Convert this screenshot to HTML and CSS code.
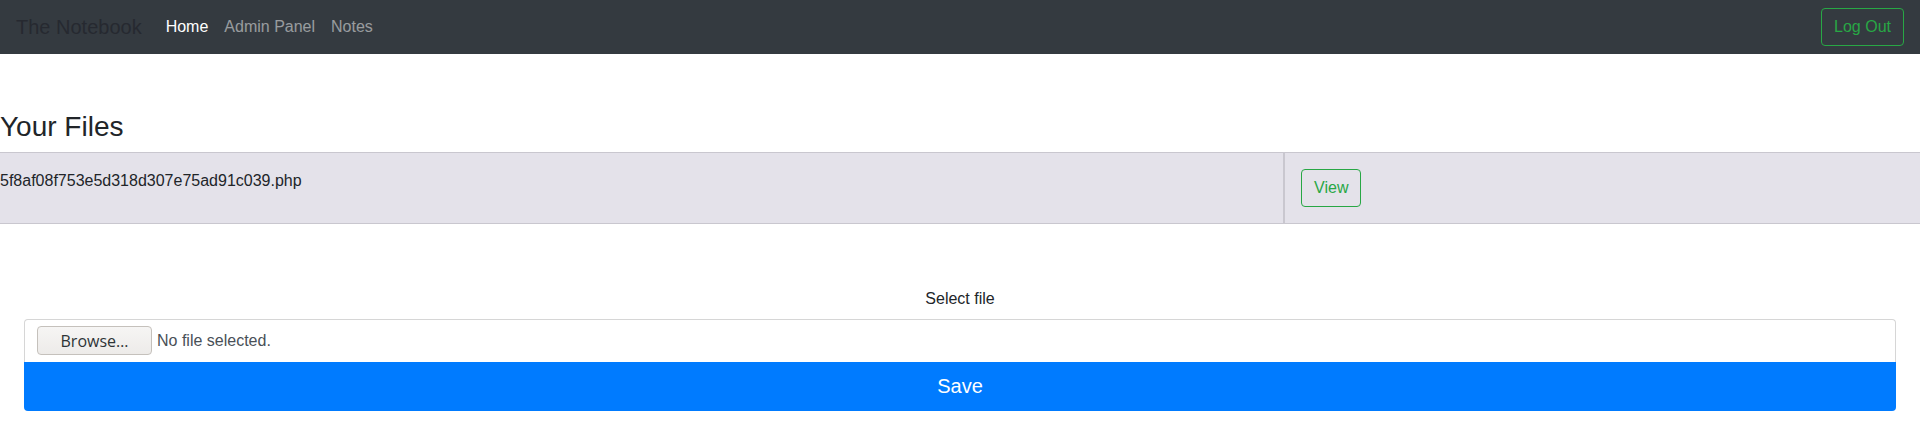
FILE: index.html
```
<!DOCTYPE html>
<html lang="en">
<head>
<meta charset="utf-8">
<title>The Notebook</title>
<link rel="stylesheet" href="styles.css">
</head>
<body>
<nav class="navbar">
  <a class="brand" href="#">The Notebook</a>
  <ul class="nav">
    <li><a class="nav-link active" href="#">Home</a></li>
    <li><a class="nav-link" href="#">Admin Panel</a></li>
    <li><a class="nav-link" href="#">Notes</a></li>
  </ul>
  <button class="btn btn-outline logout">Log Out</button>
</nav>
<main class="content">
  <h3 class="title">Your Files</h3>
  <div class="files">
    <div class="cell cell-name">5f8af08f753e5d318d307e75ad91c039.php</div>
    <div class="cell cell-action"><button class="btn btn-outline">View</button></div>
  </div>
  <form class="upload">
    <label class="label">Select file</label>
    <div class="file-input">
      <span class="browse">Browse…</span>
      <span class="file-status">No file selected.</span>
    </div>
    <button type="button" class="save">Save</button>
  </form>
</main>
</body>
</html>
```
FILE: styles.css
```
* { box-sizing: border-box; }
body {
  margin: 0;
  font-family: "Liberation Sans", Arial, sans-serif;
  font-size: 16px;
  line-height: 1.5;
  color: #212529;
  background: #fff;
}
.navbar {
  display: flex;
  align-items: center;
  height: 54px;
  padding: 0 16px;
  background: #343a40;
}
.brand {
  font-size: 20px;
  line-height: 30px;
  color: #262930;
  text-decoration: none;
  margin-right: 16px;
}
.nav {
  display: flex;
  list-style: none;
  margin: 0;
  padding: 0;
}
.nav-link {
  display: block;
  padding: 8px;
  color: rgba(255,255,255,.5);
  text-decoration: none;
}
.nav-link.active { color: #fff; }
.btn {
  font-family: "Liberation Sans", Arial, sans-serif;
  font-size: 16px;
  line-height: 24px;
  padding: 6px 12px;
  border-radius: 4px;
  background: transparent;
  cursor: pointer;
}
.btn-outline {
  color: #28a745;
  border: 1px solid #28a745;
}
.logout { margin-left: auto; }
.content { padding-top: 56px; }
.title {
  font-size: 28px;
  font-weight: 500;
  line-height: 1.2;
  margin: 0 0 8px;
}
.files {
  display: grid;
  grid-template-columns: 66.93% 1fr;
  background: #e4e2ea;
  border-top: 1px solid #c9c7cf;
  border-bottom: 1px solid #c9c7cf;
}
.cell { padding: 16px; }
.cell-name {
  padding-left: 0;
  border-right: 2px solid #c9c7cf;
}
.upload {
  margin: 63px 24px 0;
  display: flex;
  flex-direction: column;
}
.label {
  text-align: center;
  margin-bottom: 8px;
}
.file-input {
  display: flex;
  align-items: center;
  gap: 5px;
  height: 43px;
  padding: 0 12px;
  border: 1px solid #d6d6d6;
  border-bottom: 0;
  border-radius: 4px 4px 0 0;
}
.browse {
  display: flex;
  align-items: center;
  justify-content: center;
  width: 115px;
  height: 29px;
  font-family: "Open Sans", "DejaVu Sans", sans-serif;
  font-size: 16px;
  color: #2e3436;
  background: linear-gradient(#f6f5f4, #edebe9);
  border: 1px solid #c5c1bc;
  border-radius: 4px;
}
.file-status { color: #495057; }
.save {
  height: 49px;
  border: 0;
  border-radius: 0 0 4px 4px;
  background: #007bff;
  color: #fff;
  font-family: "Liberation Sans", Arial, sans-serif;
  font-size: 20px;
}
```
